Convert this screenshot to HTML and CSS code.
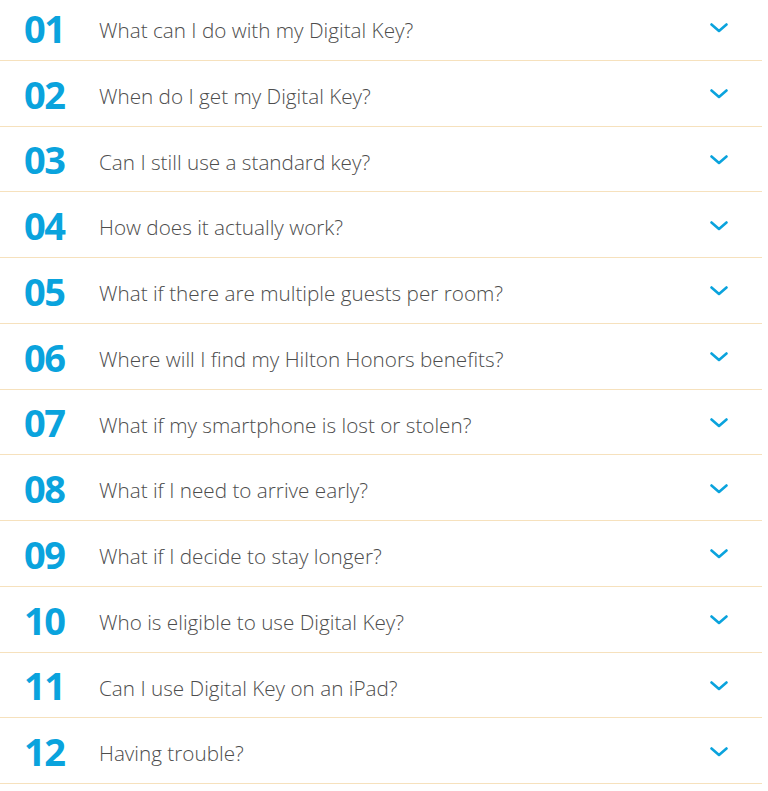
FILE: index.html
```html
<!DOCTYPE html>
<html lang="en">
<head>
<meta charset="utf-8">
<title>Digital Key FAQ</title>
<link rel="stylesheet" href="styles.css">
</head>
<body>
<ul class="faq">
  <li class="faq-item"><span class="num">01</span><span class="q">What can I do with my Digital Key?</span><svg class="chev" viewBox="0 0 18 10"><path d="M1.5 1.5 L9 8 L16.5 1.5"/></svg></li>
  <li class="faq-item"><span class="num">02</span><span class="q">When do I get my Digital Key?</span><svg class="chev" viewBox="0 0 18 10"><path d="M1.5 1.5 L9 8 L16.5 1.5"/></svg></li>
  <li class="faq-item"><span class="num">03</span><span class="q">Can I still use a standard key?</span><svg class="chev" viewBox="0 0 18 10"><path d="M1.5 1.5 L9 8 L16.5 1.5"/></svg></li>
  <li class="faq-item"><span class="num">04</span><span class="q">How does it actually work?</span><svg class="chev" viewBox="0 0 18 10"><path d="M1.5 1.5 L9 8 L16.5 1.5"/></svg></li>
  <li class="faq-item"><span class="num">05</span><span class="q">What if there are multiple guests per room?</span><svg class="chev" viewBox="0 0 18 10"><path d="M1.5 1.5 L9 8 L16.5 1.5"/></svg></li>
  <li class="faq-item"><span class="num">06</span><span class="q">Where will I find my Hilton Honors benefits?</span><svg class="chev" viewBox="0 0 18 10"><path d="M1.5 1.5 L9 8 L16.5 1.5"/></svg></li>
  <li class="faq-item"><span class="num">07</span><span class="q">What if my smartphone is lost or stolen?</span><svg class="chev" viewBox="0 0 18 10"><path d="M1.5 1.5 L9 8 L16.5 1.5"/></svg></li>
  <li class="faq-item"><span class="num">08</span><span class="q">What if I need to arrive early?</span><svg class="chev" viewBox="0 0 18 10"><path d="M1.5 1.5 L9 8 L16.5 1.5"/></svg></li>
  <li class="faq-item"><span class="num">09</span><span class="q">What if I decide to stay longer?</span><svg class="chev" viewBox="0 0 18 10"><path d="M1.5 1.5 L9 8 L16.5 1.5"/></svg></li>
  <li class="faq-item"><span class="num">10</span><span class="q">Who is eligible to use Digital Key?</span><svg class="chev" viewBox="0 0 18 10"><path d="M1.5 1.5 L9 8 L16.5 1.5"/></svg></li>
  <li class="faq-item"><span class="num">11</span><span class="q">Can I use Digital Key on an iPad?</span><svg class="chev" viewBox="0 0 18 10"><path d="M1.5 1.5 L9 8 L16.5 1.5"/></svg></li>
  <li class="faq-item"><span class="num">12</span><span class="q">Having trouble?</span><svg class="chev" viewBox="0 0 18 10"><path d="M1.5 1.5 L9 8 L16.5 1.5"/></svg></li>
</ul>
</body>
</html>
```
FILE: styles.css
```css
html, body {
  margin: 0;
  padding: 0;
  background: #ffffff;
}

.faq {
  list-style: none;
  margin: -5px 6px 0 0;
  padding: 0;
}

.faq-item {
  display: flex;
  align-items: center;
  height: 64.75px;
  border-bottom: 1px solid #f6e1bd;
  padding: 0 34px 0 24px;
}

.num {
  width: 75px;
  flex: none;
  font-family: "Open Sans", sans-serif;
  font-weight: 700;
  font-size: 38px;
  letter-spacing: -1.5px;
  color: #0aa3dd;
  line-height: 1;
  padding-top: 1px;
}

.q {
  flex: 1;
  font-family: "Open Sans", sans-serif;
  font-weight: 300;
  font-size: 20.7px;
  color: #4d4d4d;
  line-height: 1;
  padding-top: 6px;
}

.chev {
  width: 18px;
  height: 10px;
  flex: none;
  fill: none;
  stroke: #0aa3dd;
  stroke-width: 2.6;
  stroke-linecap: round;
  stroke-linejoin: round;
  margin-top: 2px;
}
```
